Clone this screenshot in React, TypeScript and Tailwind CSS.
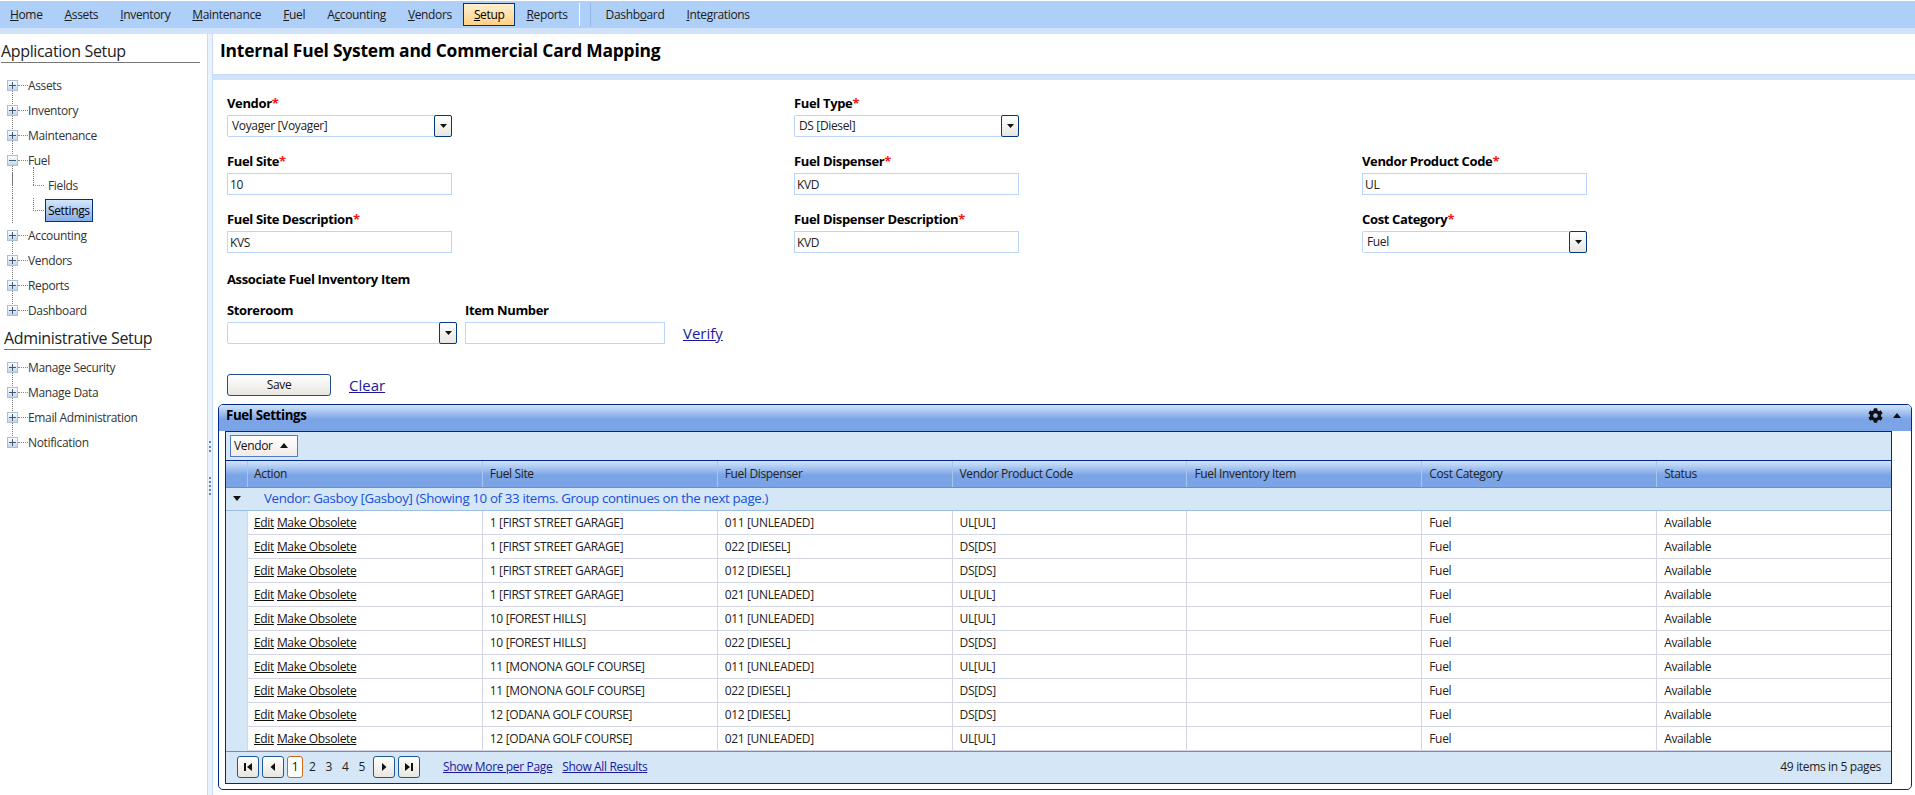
import { FaCog } from "react-icons/fa";

const menu = [
  ["", "H", "ome"],
  ["", "A", "ssets"],
  ["", "I", "nventory"],
  ["", "M", "aintenance"],
  ["", "F", "uel"],
  ["A", "c", "counting"],
  ["", "V", "endors"],
  ["", "S", "etup"],
  ["", "R", "eports"],
];

const columns = ["Action", "Fuel Site", "Fuel Dispenser", "Vendor Product Code", "Fuel Inventory Item", "Cost Category", "Status"];

const rows = [
  ["1 [FIRST STREET GARAGE]", "011 [UNLEADED]", "UL[UL]"],
  ["1 [FIRST STREET GARAGE]", "022 [DIESEL]", "DS[DS]"],
  ["1 [FIRST STREET GARAGE]", "012 [DIESEL]", "DS[DS]"],
  ["1 [FIRST STREET GARAGE]", "021 [UNLEADED]", "UL[UL]"],
  ["10 [FOREST HILLS]", "011 [UNLEADED]", "UL[UL]"],
  ["10 [FOREST HILLS]", "022 [DIESEL]", "DS[DS]"],
  ["11 [MONONA GOLF COURSE]", "011 [UNLEADED]", "UL[UL]"],
  ["11 [MONONA GOLF COURSE]", "022 [DIESEL]", "DS[DS]"],
  ["12 [ODANA GOLF COURSE]", "012 [DIESEL]", "DS[DS]"],
  ["12 [ODANA GOLF COURSE]", "021 [UNLEADED]", "UL[UL]"],
];

function MenuItem({ item, active }: { item: string[]; active?: boolean }) {
  return (
    <div
      className={
        active
          ? "flex items-center h-[23px] px-[10px] border border-[#00337f] bg-[linear-gradient(to_bottom,#fff0d0,#ffd184)] text-black"
          : "flex items-center h-[23px] px-[11px] text-[#1a1a1a]"
      }
    >
      {item[0]}
      <span className="underline">{item[1]}</span>
      {item[2]}
    </div>
  );
}

function Expander({ open }: { open?: boolean }) {
  return (
    <div className="relative z-10 w-[11px] h-[11px] border border-[#a9c0d6] bg-[linear-gradient(to_bottom,#ffffff,#c3d6e6)] flex items-center justify-center shrink-0">
      <svg width="7" height="7" viewBox="0 0 7 7">
        <rect x="0" y="3" width="7" height="1" fill="#3f5a78" />
        {!open && <rect x="3" y="0" width="1" height="7" fill="#3f5a78" />}
      </svg>
    </div>
  );
}

function TreeRow({ label, open, last }: { label: string; open?: boolean; last?: boolean }) {
  return (
    <div className="relative flex items-center h-[25px] pl-[7px] text-[#333]">
      {!last && <div className="absolute left-[12px] top-[12px] h-[25px] border-l border-dotted border-[#777]" />}
      <Expander open={open} />
      <div className="w-[10px] border-t border-dotted border-[#888]" />
      <span>{label}</span>
    </div>
  );
}

function TreeChild({ label, selected, first }: { label: string; selected?: boolean; first?: boolean }) {
  return (
    <div className="relative flex items-center h-[25px] pl-[33px] text-[#333]">
      <div className="absolute left-[12px] top-0 h-[25px] border-l border-dotted border-[#777]" />
      <div className={first ? "absolute left-[33px] top-[-6px] h-[18px] border-l border-dotted border-[#777]" : "absolute left-[33px] top-0 h-[13px] border-l border-dotted border-[#777]"} />
      <div className="w-[11px] border-t border-dotted border-[#888]" />
      {selected ? (
        <span className="ml-px flex items-center h-[23px] px-[2px] border border-[#00337f] bg-[linear-gradient(to_bottom,#d5e5fa,#86aee8)] text-black">{label}</span>
      ) : (
        <span className="ml-[4px]">{label}</span>
      )}
    </div>
  );
}

function SectionTitle({ children, className }: { children: string; className: string }) {
  return <div className={"text-[16px] leading-[21px] whitespace-nowrap text-[#222] border-b border-[#777] " + className}>{children}</div>;
}

function Label({ text, required, className = "" }: { text: string; required?: boolean; className?: string }) {
  return (
    <div className={"h-[21px] pt-px leading-[16px] font-bold text-[13px] text-black " + className}>
      {text}
      {required && <span className="text-[#f01818]">*</span>}
    </div>
  );
}

function TextBox({ value, className = "w-[225px]" }: { value: string; className?: string }) {
  return (
    <input
      readOnly
      value={value}
      className={"block h-[22px] px-[2px] border border-[#bcd6fb] bg-white text-[#222] outline-none " + className}
    />
  );
}

function Combo({ value, className = "w-[225px]" }: { value: string; className?: string }) {
  return (
    <div className={"flex h-[22px] border border-[#bcd6fb] rounded-[2px] bg-white " + className}>
      <div className="flex-1 flex items-center pl-[4px] text-[#222]">{value}</div>
      <div className="-my-px -mr-px w-[18px] flex items-center justify-center border border-[#003a7d] rounded-[2px] bg-[linear-gradient(to_bottom,#ffffff,#e9e6e0)]">
        <svg width="7" height="4" viewBox="0 0 7 4"><path d="M0 0h7L3.5 4z" fill="#111" /></svg>
      </div>
    </div>
  );
}

function Field({ label, value, combo, required = true }: { label: string; value: string; combo?: boolean; required?: boolean }) {
  return (
    <div>
      <Label text={label} required={required} />
      {combo ? <Combo value={value} /> : <TextBox value={value} />}
    </div>
  );
}

function PagerButton({ d }: { d: string }) {
  return (
    <div className="w-[22px] h-[22px] flex items-center justify-center border border-[#1c5a96] rounded-[3px] bg-[linear-gradient(to_bottom,#ffffff,#e9e6e0)]">
      <svg width="10" height="10" viewBox="0 0 10 10"><path d={d} fill="#111" /></svg>
    </div>
  );
}

export default function App() {
  return (
    <div className="w-[1915px] h-[795px] overflow-hidden flex flex-col bg-white text-[12px] font-['Open_Sans','Noto_Sans',sans-serif] tracking-[-0.35px]">
      <div className="mt-px h-[27px] bg-[#aecff7] flex items-center">
        <div className="-ml-px flex items-center">
          {menu.map((item) => (
            <MenuItem key={item[1] + item[2]} item={item} active={item[1] === "S"} />
          ))}
        </div>
        <div className="h-[23px] w-px bg-white" />
        <div className="ml-[10px] h-[23px] w-px bg-[#8fb4e6]" />
        <div className="ml-[4px] flex">
          <MenuItem item={["Dashb", "o", "ard"]} />
          <MenuItem item={["", "I", "ntegrations"]} />
        </div>
      </div>
      <div className="h-[6px] bg-[#d0e3fa]" />

      <div className="flex flex-1 min-h-0">
        <aside className="w-[207px] shrink-0 pt-[7px]">
          <SectionTitle className="ml-px w-[199px] mb-[10px]">Application Setup</SectionTitle>
          <TreeRow label="Assets" />
          <TreeRow label="Inventory" />
          <TreeRow label="Maintenance" />
          <TreeRow label="Fuel" open />
          <TreeChild label="Fields" first />
          <TreeChild label="Settings" selected />
          <TreeRow label="Accounting" />
          <TreeRow label="Vendors" />
          <TreeRow label="Reports" />
          <TreeRow label="Dashboard" last />
          <SectionTitle className="ml-[4px] w-[147px] mt-[5px] mb-[5px]">Administrative Setup</SectionTitle>
          <TreeRow label="Manage Security" />
          <TreeRow label="Manage Data" />
          <TreeRow label="Email Administration" />
          <TreeRow label="Notification" last />
        </aside>

        <div className="relative w-[6px] shrink-0 border-x border-[#c5dbf8] bg-[#eaf2fd]">
          <div className="absolute left-[1px] top-[407px] h-[11px] border-l-2 border-dotted border-[#5f86b8]" />
          <div className="absolute left-[1px] top-[443px] h-[18px] border-l-2 border-dotted border-[#5f86b8]" />
        </div>

        <main className="flex-1 min-w-0 flex flex-col">
          <div className="h-[40px] pl-[7px] pb-[8px] flex items-center text-[17.4px] font-bold text-black tracking-[-0.2px]">
            Internal Fuel System and Commercial Card Mapping
          </div>
          <div className="h-[6px] bg-[#d0e3fa] border-t border-[#c2d9f7]" />

          <div className="pl-[14px] pt-[14px]">
            <div className="grid grid-cols-[567px_568px_1fr] gap-y-[15px]">
              <Field label="Vendor" value="Voyager [Voyager]" combo />
              <Field label="Fuel Type" value="DS [Diesel]" combo />
              <div />
              <Field label="Fuel Site" value="10" />
              <Field label="Fuel Dispenser" value="KVD" />
              <Field label="Vendor Product Code" value="UL" />
              <Field label="Fuel Site Description" value="KVS" />
              <Field label="Fuel Dispenser Description" value="KVD" />
              <Field label="Cost Category" value="Fuel" combo />
            </div>

            <Label text="Associate Fuel Inventory Item" className="mt-[17px] h-[31px]" />
            <div className="flex items-end">
              <div>
                <Label text="Storeroom" />
                <Combo value="" className="w-[230px]" />
              </div>
              <div className="ml-[8px]">
                <Label text="Item Number" />
                <TextBox value="" className="w-[200px]" />
              </div>
              <a className="ml-[18px] h-[22px] text-[15px] leading-[22px] text-[#1a1a9c] underline tracking-normal">Verify</a>
            </div>

            <div className="mt-[30px] flex items-center">
              <div className="w-[104px] h-[22px] flex items-center justify-center border border-[#1c4f8c] rounded-[3px] bg-[linear-gradient(to_bottom,#ffffff,#e9e6e0)] text-[#111]">
                Save
              </div>
              <a className="ml-[18px] text-[15px] text-[#1a1a9c] underline tracking-normal">Clear</a>
            </div>
          </div>

          <section className="ml-[5px] mt-[7px] w-[1694px] h-[386px] border border-[#00288f] rounded-[5px] overflow-hidden flex flex-col">
            <div className="h-[26px] shrink-0 flex items-center justify-between pl-[7px] pr-[10px] pb-[4px] bg-[linear-gradient(to_bottom,#d3e4fa_0%,#7aa4e6_55%,#7aa4e6_100%)]">
              <span className="font-bold text-[13.3px] text-black">Fuel Settings</span>
              <div className="flex items-center gap-[10px]">
                <FaCog className="w-[15px] h-[15px] text-[#111]" />
                <svg width="8" height="5" viewBox="0 0 8 5"><path d="M0 5L4 0l4 5z" fill="#111" /></svg>
              </div>
            </div>
            <div className="ml-[6px] w-[1667px] h-[353px] border border-[#00288f] flex flex-col bg-[#d5e6f7]">
              <div className="h-[29px] shrink-0 pl-[4px] pt-[3px] border-b border-[#00288f]">
                <div className="w-[68px] h-[22px] flex items-center gap-[7px] pl-[3px] border border-[#4f7cc4] bg-[linear-gradient(to_bottom,#ffffff,#f2ebe6)] text-[#111]">
                  Vendor
                  <svg width="8" height="5" viewBox="0 0 8 5"><path d="M0 5L4 0l4 5z" fill="#111" /></svg>
                </div>
              </div>

              <div className="h-[27px] shrink-0 grid grid-cols-[21px_repeat(7,1fr)] bg-[linear-gradient(to_bottom,#d3e4fa_0%,#7aa4e6_55%,#7aa4e6_100%)] border-b border-[#5f90dc]">
                <div />
                {columns.map((c, i) => (
                  <div key={c} className={(i === 0 ? "pl-[6px]" : "pl-[7px]") + " pt-px flex items-center border-l border-[#a5c4ef] text-[#222]"}>{c}</div>
                ))}
              </div>

              <div className="h-[23px] shrink-0 flex items-center border-b border-[#9dbfe6]">
                <div className="w-[21px] flex justify-center">
                  <svg width="8" height="5" viewBox="0 0 8 5"><path d="M0 0h8L4 5z" fill="#111" /></svg>
                </div>
                <span className="pl-[17px] text-[13.3px] text-[#1550d8]">
                  Vendor: Gasboy [Gasboy] (Showing 10 of 33 items. Group continues on the next page.)
                </span>
              </div>

              {rows.map((r, i) => (
                <div key={i} className="h-[24px] shrink-0 grid grid-cols-[21px_repeat(7,1fr)]">
                  <div />
                  <div className="flex items-center gap-[3px] pl-[6px] pt-[2px] bg-white border-l border-b border-[#d5d5e8] text-[#111] underline">
                    <span>Edit</span>
                    <span>Make Obsolete</span>
                  </div>
                  {[r[0], r[1], r[2], "", "Fuel", "Available"].map((v, j) => (
                    <div key={j} className="flex items-center pl-[7px] pt-[2px] bg-white border-l border-b border-[#d5d5e8] text-[#222]">{v}</div>
                  ))}
                </div>
              ))}

              <div className="flex-1 flex items-center pl-[11px] pr-[10px] border-t border-[#5f90dc]">
                <div className="flex items-center gap-[3px]">
                  <PagerButton d="M1 1h2v8H1zM9 1v8L4 5z" />
                  <PagerButton d="M7 1v8L2.5 5z" />
                </div>
                <div className="flex items-center ml-[3px]">
                  <div className="w-[16px] h-[22px] flex items-center justify-center border border-[#c8691e] rounded-[3px] bg-white text-[#111]">1</div>
                  {["2", "3", "4", "5"].map((n) => (
                    <span key={n} className="w-[16.5px] text-center text-[#222] pl-[2px]">{n}</span>
                  ))}
                </div>
                <div className="flex items-center gap-[3px] ml-[4px]">
                  <PagerButton d="M3 1v8l4.5-4z" />
                  <PagerButton d="M1 1v8l5-4zM7 1h2v8H7z" />
                </div>
                <a className="ml-[23px] text-[#1a1a9c] underline">Show More per Page</a>
                <a className="ml-[10px] text-[#1a1a9c] underline">Show All Results</a>
                <span className="ml-auto text-[#222]">49 items in 5 pages</span>
              </div>
            </div>
          </section>
        </main>
      </div>
    </div>
  );
}
